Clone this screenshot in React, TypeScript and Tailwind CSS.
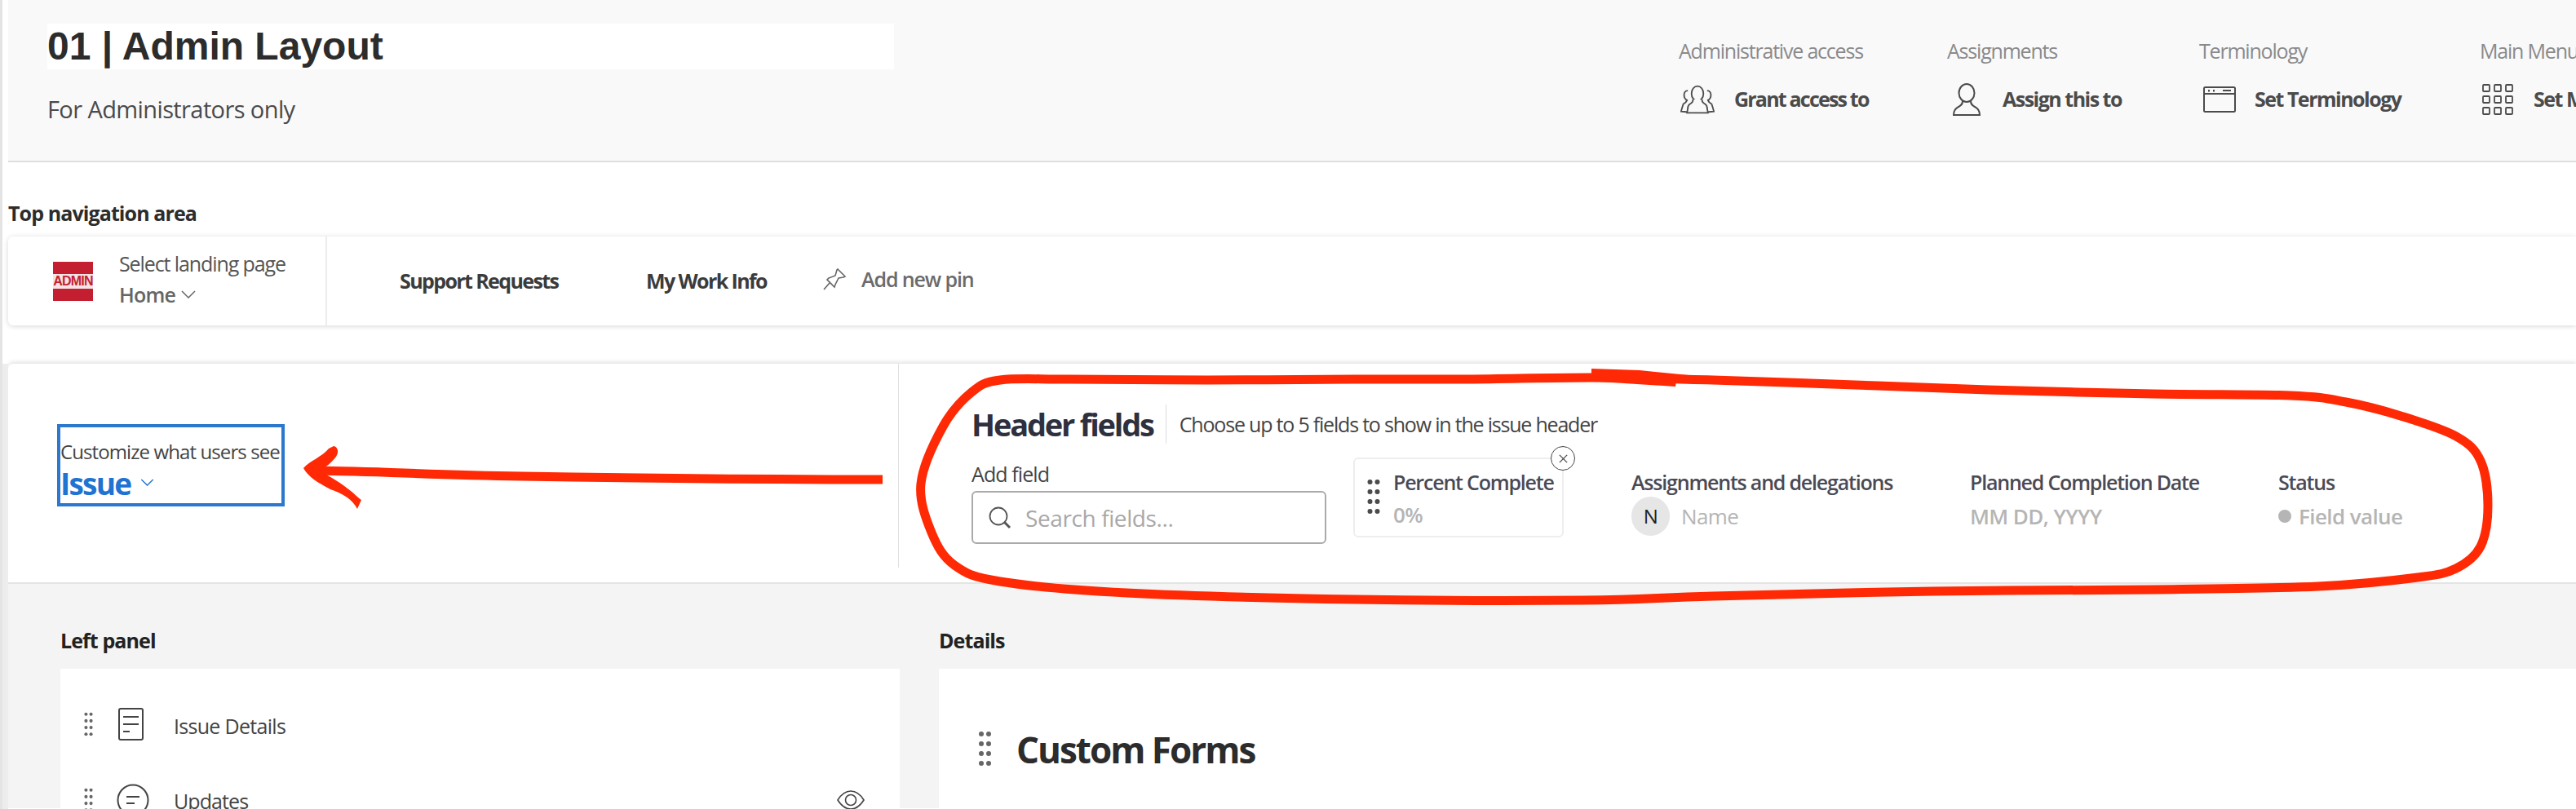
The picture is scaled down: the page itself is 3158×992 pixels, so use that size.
const clean = "font-['Open_Sans',sans-serif]";

function DragDots({ className }: { className: string }) {
  return (
    <svg viewBox="0 0 16 44" className={className} fill="currentColor">
      {[4, 16, 28, 40].map((y) => (
        <g key={y}>
          <circle cx="3.5" cy={y} r="3" />
          <circle cx="12.5" cy={y} r="3" />
        </g>
      ))}
    </svg>
  );
}

function Chevron({ className }: { className: string }) {
  return (
    <svg viewBox="0 0 18 10" className={className} fill="none" stroke="currentColor" strokeWidth="1.5">
      <path d="M1 1l8 8 8-8" />
    </svg>
  );
}

function GroupIcon() {
  return (
    <svg viewBox="0 0 46 38" className="w-[42px] h-[38px] text-[#4b4b4b]" fill="none" stroke="currentColor" strokeWidth="2">
      <path d="M10 7c-3 0-5 2.500-5 6s2 6 4 7c-1 3-3 4-5 5-1 3-2 6-3 10l10 1" />
      <path d="M36 7c3 0 5 2.500 5 6s-2 6-4 7c1 3 3 4 5 5 1 3 2 6 3 10l-10 1" />
      <ellipse cx="23" cy="11" rx="8" ry="10" fill="#f9f9fa" />
      <path d="M17 19c0 4-2 5-4 6-2 1-3 3-3 6l-1 6h28l-1-6c0-3-1-5-3-6-2-1-4-2-4-6" fill="#f9f9fa" />
    </svg>
  );
}

function PersonIcon() {
  return (
    <svg viewBox="0 0 36 40" className="w-[36px] h-[40px] text-[#4b4b4b]" fill="none" stroke="currentColor" strokeWidth="2">
      <ellipse cx="18" cy="12" rx="9.500" ry="11" />
      <path d="M13 22c0 4-2 5-5 7-4 2-6 5-6 10h32c0-5-2-8-6-10-3-2-5-3-5-7" />
    </svg>
  );
}

function WindowIcon() {
  return (
    <svg viewBox="0 0 40 32" className="w-[40px] h-[32px] text-[#4b4b4b]" fill="none" stroke="currentColor" strokeWidth="2">
      <rect x="1" y="1" width="38" height="30" rx="1.500" />
      <path d="M1 9h38" />
      <path d="M7 4v2.500M13 4v2.500M24 5h10" />
    </svg>
  );
}

function GridIcon() {
  return (
    <svg viewBox="0 0 38 38" className="w-[38px] h-[38px] text-[#4b4b4b]" fill="none" stroke="currentColor" strokeWidth="1.800">
      {[1, 15, 29].map((y) =>
        [1, 15, 29].map((x) => <rect key={`${x}-${y}`} x={x} y={y} width="8" height="8" rx="1" />)
      )}
    </svg>
  );
}

function PinIcon() {
  return (
    <svg viewBox="0 0 30 28" className="w-[30px] h-[28px] text-[#666666]" fill="none" stroke="currentColor" strokeWidth="1.600">
      <path d="M19 1l9 9-2 1-6 1-4 8-1 3-9-9 2-2 8-3 2-7z" />
      <path d="M9 18l-7 8" />
    </svg>
  );
}

function SearchIcon() {
  return (
    <svg viewBox="0 0 28 28" className="w-[28px] h-[28px] text-[#555555]" fill="none" stroke="currentColor" strokeWidth="1.800">
      <circle cx="12" cy="12" r="10.500" />
      <path d="M19 19l7 7" strokeWidth="3" />
    </svg>
  );
}

const ringPoints = [
  [1226, 466], [1310, 465], [1480, 466], [1661, 465], [1800, 465], [1953, 463], [2100, 466], [2302, 473], [2437, 478],
  [2640, 483], [2808, 485], [2876, 493], [2943, 510], [3011, 535], [3041, 565], [3050, 620], [3041, 670], [3011, 697],
  [2964, 708], [2842, 719], [2640, 723], [2370, 725], [2100, 731], [1942, 736], [1661, 735], [1381, 727], [1226, 713],
  [1170, 693], [1142, 653], [1129, 593], [1156, 523], [1191, 481],
];

function smoothRing(pts: number[][]) {
  const n = pts.length;
  let d = `M${pts[0][0]} ${pts[0][1]}`;
  for (let i = 0; i < n; i++) {
    const p0 = pts[(i - 1 + n) % n];
    const p1 = pts[i];
    const p2 = pts[(i + 1) % n];
    const p3 = pts[(i + 2) % n];
    const c1x = p1[0] + (p2[0] - p0[0]) / 6;
    const c1y = p1[1] + (p2[1] - p0[1]) / 6;
    const c2x = p2[0] - (p3[0] - p1[0]) / 6;
    const c2y = p2[1] - (p3[1] - p1[1]) / 6;
    d += `C${c1x} ${c1y} ${c2x} ${c2y} ${p2[0]} ${p2[1]}`;
  }
  return d + "Z";
}

function Annotations() {
  return (
    <svg viewBox="0 0 3158 992" className="absolute left-0 top-0 w-[3158px] h-[992px] pointer-events-none" fill="none" stroke="#ff2a05" strokeLinecap="round" strokeLinejoin="round">
      <path strokeWidth="11" d={smoothRing(ringPoints)} />
      <path fill="#ff2a05" stroke="none" d="M1951 452L2010 454 2100 463 2100 470 2055 467 2054 474 1960 468 1951 463Z" />
      <path strokeWidth="11" strokeLinecap="butt" d="M1082 588C900 588 760 586 640 584S470 578 386 577" />
      <path fill="#ff2a05" stroke="none" d="M409 547C414 548 416 554 412 560 406 568 400 572 392 577 405 585 418 592 430 602 436 607 440 611 443 613L438 624C432 612 420 605 405 600 390 592 378 585 372 574 380 565 395 560 403 550Z" />
    </svg>
  );
}

function HeaderValueCol({ label, width, children }: { label: string; width: string; children: React.ReactNode }) {
  return (
    <div className={`${width} shrink-0 pt-[14px]`}>
      <div className="text-[25px] leading-[32px] font-semibold text-[#4a4a55] tracking-[-1.2px] whitespace-nowrap">{label}</div>
      <div className="mt-[2px] h-[48px] flex items-center text-[26px] font-semibold text-[#b5b5b5] tracking-[-0.6px] whitespace-nowrap">
        {children}
      </div>
    </div>
  );
}

export default function App() {
  return (
    <div className={`relative w-[3158px] h-[992px] overflow-hidden bg-white pl-[10px] ${clean}`}>
      {/* page edge */}
      <div className="absolute left-0 top-0 bottom-0 w-[3px] bg-[#e4e4e4]" />
      <div className="absolute left-[3px] top-[446px] bottom-0 w-[7px] bg-[#ededed]" />

      {/* page header */}
      <div className="flex h-[199px] bg-[#f9f9fa] border-b-2 border-[#dedede]">
        <div className="w-[2048px] shrink-0 pl-[48px] pt-[29px]">
          <div className="w-[1038px] h-[56px] bg-white flex items-center">
            <span className="text-[48px] font-bold text-[#2c2c2c] font-['Liberation_Sans',sans-serif] leading-none">01 | Admin Layout</span>
          </div>
          <div className="mt-[30px] text-[29px] leading-[38px] text-[#4a4a4a] tracking-[-0.6px]">For Administrators only</div>
        </div>
        <div className="w-[329px] shrink-0 pt-[46px]">
          <div className="text-[25px] leading-[32px] text-[#8a8a8a] tracking-[-1.2px] whitespace-nowrap">Administrative access</div>
          <div className="mt-[25px] flex items-center gap-[24px] h-[38px] pl-[2px]">
            <GroupIcon />
            <span className="text-[25px] font-bold text-[#4b4b4b] tracking-[-1.8px] whitespace-nowrap">Grant access to</span>
          </div>
        </div>
        <div className="w-[309px] shrink-0 pt-[46px]">
          <div className="text-[25px] leading-[32px] text-[#8a8a8a] tracking-[-1.2px] whitespace-nowrap">Assignments</div>
          <div className="mt-[25px] flex items-center gap-[26px] h-[38px] pl-[6px]">
            <PersonIcon />
            <span className="text-[25px] font-bold text-[#4b4b4b] tracking-[-1.5px] whitespace-nowrap">Assign this to</span>
          </div>
        </div>
        <div className="w-[344px] shrink-0 pt-[46px]">
          <div className="text-[25px] leading-[32px] text-[#8a8a8a] tracking-[-1.2px] whitespace-nowrap">Terminology</div>
          <div className="mt-[25px] flex items-center gap-[23px] h-[38px] pl-[5px]">
            <WindowIcon />
            <span className="text-[25px] font-bold text-[#4b4b4b] tracking-[-1.5px] whitespace-nowrap">Set Terminology</span>
          </div>
        </div>
        <div className="shrink-0 pt-[46px]">
          <div className="text-[25px] leading-[32px] text-[#8a8a8a] tracking-[-1.2px] whitespace-nowrap">Main Menu</div>
          <div className="mt-[25px] flex items-center gap-[25px] h-[38px] pl-[3px]">
            <GridIcon />
            <span className="text-[25px] font-bold text-[#4b4b4b] tracking-[-1.5px] whitespace-nowrap">Set Main Menu</span>
          </div>
        </div>
      </div>

      {/* top navigation */}
      <div className="mt-[45px] text-[25px] leading-[34px] font-bold text-[#2c2c2c] tracking-[-0.9px]">Top navigation area</div>
      <div className="mt-[12px] h-[109px] flex bg-white rounded-l-[6px] shadow-[0_1px_6px_rgba(0,0,0,0.16)]">
        <div className="w-[391px] shrink-0 flex items-center pl-[55px] border-r-2 border-[#ececec]">
          <div className="w-[49px] h-[48px] bg-[#c41f30] flex items-center justify-center">
            <span className="w-full h-[18px] bg-[#f6e3e5] text-[#c41f30] text-[16px] leading-[18px] font-bold text-center font-['Liberation_Sans',sans-serif] tracking-[-0.8px] whitespace-nowrap">ADMIN</span>
          </div>
          <div className="ml-[32px] -mt-[4px]">
            <div className="text-[25px] leading-[34px] text-[#555555] tracking-[-1.1px] whitespace-nowrap">Select landing page</div>
            <div className="mt-[3px] flex items-center gap-[7px] text-[25px] leading-[36px] font-semibold text-[#666666] tracking-[-0.8px]">
              Home
              <Chevron className="w-[18px] h-[10px]" />
            </div>
          </div>
        </div>
        <div className="flex items-center pl-[89px] text-[#3b3b3b] font-bold text-[25px] tracking-[-1.6px]">
          <span className="w-[302px] whitespace-nowrap">Support Requests</span>
          <span className="w-[216px] whitespace-nowrap">My Work Info</span>
          <div className="flex items-center gap-[18px] text-[#6b6b6b] font-semibold text-[25px] tracking-[-1.1px] -mt-[4px]">
            <PinIcon />
            Add new pin
          </div>
        </div>
      </div>

      {/* customize card */}
      <div className="mt-[47px] h-[270px] flex bg-white rounded-tl-[6px] border-b-2 border-[#e4e4e4] shadow-[0_-2px_5px_rgba(0,0,0,0.12)]">
        <div className="w-[1092px] shrink-0 h-[250px] border-r border-[#e0e0e0] pl-[60px] pt-[74px]">
          <div className="w-[279px] h-[101px] border-4 border-[#2b78cd] pt-[14px]">
            <div className="text-[24px] leading-[32px] text-[#444444] tracking-[-0.9px] whitespace-nowrap">Customize what users see</div>
            <div className="flex items-start gap-[12px]">
              <span className="text-[37px] leading-[46px] font-bold text-[#1f73d1] tracking-[-1.8px]">Issue</span>
              <Chevron className="w-[17px] h-[9px] mt-[17px] text-[#1f73d1]" />
            </div>
          </div>
        </div>
        <div className="pl-[89px] pt-[50px]">
          <div className="flex items-center h-[48px]">
            <span className="text-[38px] font-bold text-[#2e3040] tracking-[-2.2px] whitespace-nowrap">Header fields</span>
            <div className="ml-[15px] h-[48px] w-px bg-[#dddddd]" />
            <span className="ml-[16px] mt-[2px] text-[25px] text-[#444444] tracking-[-1.2px] whitespace-nowrap">Choose up to 5 fields to show in the issue header</span>
          </div>
          <div className="flex mt-[17px]">
            <div className="w-[435px] shrink-0 pt-[5px]">
              <div className="text-[25px] leading-[30px] text-[#444444] tracking-[-0.9px]">Add field</div>
              <div className="mt-[6px] h-[65px] border-2 border-[#aaaaaa] rounded-[6px] flex items-center pl-[19px] gap-[17px]">
                <SearchIcon />
                <span className="text-[28px] text-[#a8a8a8] tracking-[-0.4px]">Search fields...</span>
              </div>
            </div>
            <div className="relative ml-[33px] w-[258px] h-[98px] shrink-0 border-2 border-[#eeeeee] rounded-[6px] flex pl-[15px]">
              <DragDots className="w-[16px] h-[44px] mt-[24px] text-[#4b4b4b]" />
              <div className="ml-[16px] pt-[12px]">
                <div className="text-[25px] leading-[32px] font-semibold text-[#4a4a55] tracking-[-1.2px] whitespace-nowrap">Percent Complete</div>
                <div className="mt-[8px] text-[26px] leading-[32px] font-semibold text-[#b5b5b5] tracking-[-0.6px]">0%</div>
              </div>
              <div className="absolute -right-[16px] -top-[16px] w-[30px] h-[30px] rounded-full border border-[#444444] bg-white flex items-center justify-center">
                <svg viewBox="0 0 14 14" className="w-[13px] h-[13px] text-[#444444]" fill="none" stroke="currentColor" strokeWidth="1.300">
                  <path d="M2 2l10 10M12 2L2 12" />
                </svg>
              </div>
            </div>
            <div className="ml-[83px] flex">
              <HeaderValueCol label="Assignments and delegations" width="w-[415px]">
                <span className="w-[47px] h-[48px] rounded-full bg-[#e6e6e6] flex items-center justify-center text-[24px] font-normal text-[#222222]">N</span>
                <span className="ml-[14px] font-normal">Name</span>
              </HeaderValueCol>
              <HeaderValueCol label="Planned Completion Date" width="w-[378px]">
                MM DD, YYYY
              </HeaderValueCol>
              <HeaderValueCol label="Status" width="w-[200px]">
                <span className="w-[16px] h-[16px] rounded-full bg-[#b5b5b5] mr-[9px]" />
                Field value
              </HeaderValueCol>
            </div>
          </div>
        </div>
      </div>

      {/* layout editor */}
      <div className="h-[275px] bg-[#f4f4f4] flex pl-[64px] pt-[54px]">
        <div className="w-[1029px] shrink-0">
          <div className="text-[25px] leading-[30px] font-bold text-[#222222] tracking-[-0.9px]">Left panel</div>
          <div className="mt-[20px] h-[200px] bg-white">
            <div className="flex items-center pt-[48px] pl-[28px] h-[88px]">
              <DragDots className="w-[13px] h-[30px] text-[#666666]" />
              <svg viewBox="0 0 31 40" className="ml-[30px] w-[31px] h-[40px] text-[#444444]" fill="none" stroke="currentColor" strokeWidth="2">
                <rect x="1" y="1" width="29" height="38" rx="2" />
                <path d="M6 11h19M6 20h19M6 29h8" />
              </svg>
              <span className="ml-[37px] mt-[6px] text-[25px] text-[#444444] tracking-[-0.7px] whitespace-nowrap">Issue Details</span>
            </div>
            <div className="flex items-center pt-[50px] pl-[28px] h-[96px] pr-[43px]">
              <DragDots className="w-[13px] h-[30px] text-[#666666]" />
              <svg viewBox="0 0 40 40" className="ml-[28px] w-[40px] h-[40px] text-[#444444]" fill="none" stroke="currentColor" strokeWidth="2">
                <circle cx="20" cy="20" r="18.500" />
                <path d="M12 16h16M12 24h10" />
              </svg>
              <span className="ml-[30px] mt-[4px] text-[25px] text-[#444444] tracking-[-0.9px]">Updates</span>
              <svg viewBox="0 0 34 24" className="ml-auto w-[34px] h-[24px] text-[#444444]" fill="none" stroke="currentColor" strokeWidth="1.600">
                <path d="M1 12C6 4 11 1 17 1s11 3 16 11c-5 8-10 11-16 11S6 20 1 12z" />
                <circle cx="17" cy="12" r="6.500" />
              </svg>
            </div>
          </div>
        </div>
        <div className="ml-[48px] flex-1">
          <div className="text-[25px] leading-[30px] font-bold text-[#222222] tracking-[-0.9px]">Details</div>
          <div className="mt-[20px] h-[200px] bg-white flex items-start pl-[48px] pt-[76px]">
            <DragDots className="w-[17px] h-[44px] text-[#666666]" />
            <span className="ml-[30px] text-[44px] leading-[46px] font-bold text-[#2c2c2c] tracking-[-2px]">Custom Forms</span>
          </div>
        </div>
      </div>

      <Annotations />
    </div>
  );
}
